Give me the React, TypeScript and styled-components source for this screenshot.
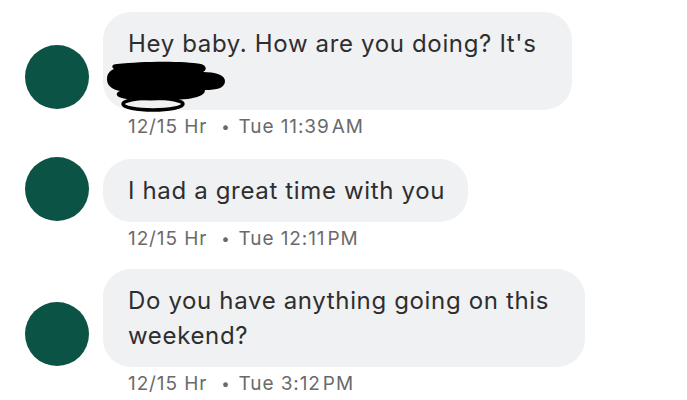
import React from "react";
import styled, { createGlobalStyle } from "styled-components";

const Global = createGlobalStyle`
  html, body { margin: 0; padding: 0; background: #ffffff; }
  body { font-family: Inter, "Liberation Sans", Arial, sans-serif; }
`;

const Thread = styled.div`
  display: flex;
  flex-direction: column;
  gap: 20px;
  padding: 12px 0 0 25px;
  width: 687px;
  height: 400px;
  box-sizing: border-box;
  overflow: hidden;
`;

const Group = styled.div`
  display: flex;
  flex-direction: column;
`;

const Row = styled.div`
  display: flex;
  align-items: flex-end;
  gap: 14px;
`;

const Avatar = styled.div`
  width: 64px;
  height: 64px;
  border-radius: 50%;
  background: #0b5345;
  flex-shrink: 0;
  margin-bottom: 1px;
`;

const Bubble = styled.div<{ $width?: number }>`
  box-sizing: border-box;
  width: ${(p) => (p.$width ? `${p.$width}px` : "auto")};
  padding: 14px 23px 14px 25px;
  border-radius: 28px;
  background: #f0f1f3;
  color: #2e2e30;
  font-size: 24px;
  line-height: 35px;
  letter-spacing: 0.65px;
`;

const Line = styled.div`
  position: relative;
  white-space: nowrap;
  height: 35px;
`;

const Redaction = styled.svg`
  position: absolute;
  left: -23px;
  top: -1px;
  width: 125px;
  height: 55px;
`;

const Meta = styled.div`
  margin: 7px 0 0 103px;
  font-size: 19px;
  line-height: 20px;
  letter-spacing: 0.9px;
  color: #6a6a6c;
  display: flex;
  align-items: center;
`;

const Dot = styled.span`
  font-size: 15px;
  margin: 0 8px 0 14px;
`;

const Suffix = styled.span`
  margin-left: 2px;
`;

const Scribble = () => (
  <Redaction viewBox="0 0 125 55">
    <path
      d="M12 4 C40 1 80 1 96 4 C102 6 102 10 98 12 C110 12 120 15 120 21 C120 28 112 30 100 30 C100 36 90 40 60 40 C40 41 20 40 14 37 C10 35 12 32 15 31 C6 29 2 25 2 19 C2 13 6 10 9 9 C6 7 7 4 12 4 Z"
      fill="#000"
    />
    <ellipse cx="48" cy="44" rx="30" ry="6" stroke="#000" strokeWidth="3.5" fill="none" />
  </Redaction>
);

type Msg = {
  lines: React.ReactNode[];
  time: string;
  ampm: string;
  width?: number;
};

const messages: Msg[] = [
  {
    lines: ["Hey baby. How are you doing? It's", <Scribble key="s" />],
    time: "Tue 11:39",
    ampm: "AM",
    width: 469,
  },
  { lines: ["I had a great time with you"], time: "Tue 12:11", ampm: "PM" },
  {
    lines: ["Do you have anything going on this", "weekend?"],
    time: "Tue 3:12",
    ampm: "PM",
    width: 482,
  },
];

export default function App() {
  return (
    <>
      <Global />
      <Thread>
        {messages.map((m, i) => (
          <Group key={i}>
            <Row>
              <Avatar />
              <Bubble $width={m.width}>
                {m.lines.map((l, j) => (
                  <Line key={j}>{l}</Line>
                ))}
              </Bubble>
            </Row>
            <Meta>
              <span>12/15 Hr</span>
              <Dot>•</Dot>
              <span>
                {m.time}
                <Suffix>{m.ampm}</Suffix>
              </span>
            </Meta>
          </Group>
        ))}
      </Thread>
    </>
  );
}
